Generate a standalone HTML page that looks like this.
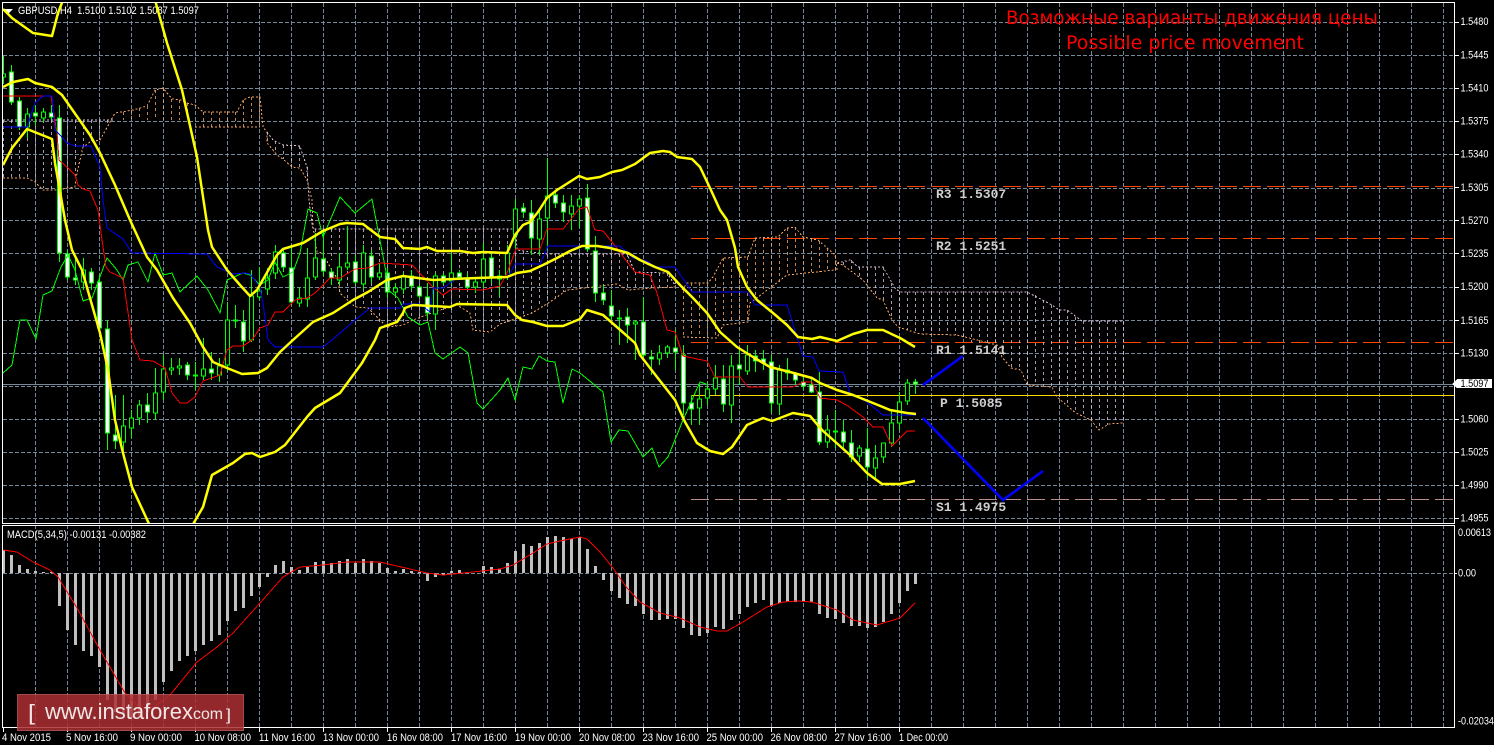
<!DOCTYPE html>
<html><head><meta charset="utf-8"><title>GBPUSD H4</title>
<style>html,body{margin:0;padding:0;background:#000;overflow:hidden}svg{display:block}
.t{font-family:"Liberation Sans",sans-serif;font-size:11px;fill:#fff}
.m{font-family:"Liberation Mono",monospace;font-size:13px;font-weight:bold;fill:#cfcfcf}
.r{font-family:"DejaVu Sans","Liberation Sans",sans-serif;font-size:19px;fill:#f00}
</style></head><body>
<svg xmlns="http://www.w3.org/2000/svg" width="1494" height="745" viewBox="0 0 1494 745">
<defs>
<clipPath id="a"><rect x="3" y="3" width="1451" height="520"/></clipPath>
<clipPath id="b"><rect x="3" y="526" width="1451" height="201"/></clipPath>
</defs>
<rect width="1494" height="745" fill="#000"/>
<!-- grid -->
<g fill="none" stroke="#778899" stroke-width="1" stroke-dasharray="4 2" shape-rendering="crispEdges">
<path d="M3 22.5H1454M3 55.5H1454M3 88.5H1454M3 121.5H1454M3 154.5H1454M3 188.5H1454M3 220.5H1454M3 253.5H1454M3 287.5H1454M3 320.5H1454M3 353.5H1454M3 386.5H1454M3 419.5H1454M3 452.5H1454M3 485.5H1454M3 518.5H1454M3 573.5H1454"/>
<path d="M35.5 3V727M67.5 3V727M99.5 3V727M131.5 3V727M163.5 3V727M195.5 3V727M227.5 3V727M259.5 3V727M291.5 3V727M323.5 3V727M355.5 3V727M387.5 3V727M419.5 3V727M451.5 3V727M483.5 3V727M515.5 3V727M547.5 3V727M579.5 3V727M611.5 3V727M643.5 3V727M675.5 3V727M707.5 3V727M739.5 3V727M771.5 3V727M803.5 3V727M835.5 3V727M867.5 3V727M899.5 3V727M931.5 3V727M963.5 3V727M995.5 3V727M1027.5 3V727M1059.5 3V727M1091.5 3V727M1123.5 3V727M1155.5 3V727M1187.5 3V727M1219.5 3V727M1251.5 3V727M1283.5 3V727M1315.5 3V727M1347.5 3V727M1379.5 3V727M1411.5 3V727M1443.5 3V727"/>
</g>
<!-- bid line + pivots -->
<g fill="none" shape-rendering="crispEdges" stroke-width="1">
<path d="M3 384.5H1454" stroke="#778899"/>
<path d="M691 186.5H1454" stroke="#ff4500" stroke-dasharray="18 6"/>
<path d="M691 238.5H1454" stroke="#ff4500" stroke-dasharray="18 6"/>
<path d="M691 342.5H1454" stroke="#ff4500" stroke-dasharray="18 6"/>
<path d="M691 395.5H1454" stroke="#ffd700"/>
<path d="M691 499.5H1454" stroke="#bc8f8f" stroke-dasharray="18 6"/>
</g>
<!-- title text -->
<path d="M3 9H13L8 14Z" fill="#fff"/>
<text class="t" x="18" y="14" textLength="181" lengthAdjust="spacingAndGlyphs" xml:space="preserve">GBPUSD,H4  1.5100 1.5102 1.5087 1.5097</text>
<text class="t" x="7" y="538" textLength="139" lengthAdjust="spacingAndGlyphs">MACD(5,34,5) -0.00131 -0.00382</text>
<g clip-path="url(#a)">
<!-- ichimoku hatch -->
<g fill="none" stroke-width="1" stroke-dasharray="3 3" stroke-opacity=".8" shape-rendering="crispEdges">
<path stroke="#d8bfd8" d="M3.5 120V178M11.5 120V178M19.5 120V178M27.5 120V178M35.5 120V182M43.5 120V188M51.5 120V190M59.5 120V190M67.5 120V188M75.5 120V176M83.5 120V147M91.5 120V142M99.5 120V140M107.5 120V125M267.5 132V143M275.5 141V153M283.5 145V159M291.5 146V167M299.5 146V168M307.5 167V180M315.5 229V252M323.5 229V255M331.5 229V260M339.5 229V295M347.5 229V300M355.5 229V305M363.5 229V307M371.5 229V315M379.5 229V322M387.5 229V328M395.5 229V326M403.5 229V325M411.5 229V320M419.5 229V318M427.5 229V321M435.5 229V318M443.5 229V314M451.5 229V310M459.5 229V307M467.5 229V305M475.5 229V331M483.5 229V332M491.5 229V329M499.5 229V325M507.5 229V322M515.5 229V320M523.5 251V316M531.5 252V313M539.5 253V307M547.5 254V302M555.5 254V298M563.5 254V292M571.5 254V290M579.5 254V289M587.5 254V287M595.5 254V287M603.5 254V285M611.5 254V285M619.5 254V284M627.5 254V290M635.5 272V289M643.5 272V288M651.5 273V288M659.5 273V287M667.5 273V287M675.5 281V287M843.5 262V265M851.5 260V270M859.5 267V278M867.5 267V283M875.5 267V296M883.5 267V300M891.5 283V318M899.5 292V327M907.5 292V330M915.5 292V334M923.5 292V335M931.5 292V335M939.5 292V335M947.5 292V335M955.5 292V335M963.5 292V338M971.5 292V342M979.5 292V345M987.5 292V348M995.5 292V345M1003.5 292V358M1011.5 292V368M1019.5 292V370M1027.5 292V385M1035.5 295V385M1043.5 300V386M1051.5 305V387M1059.5 310V398M1067.5 310V405M1075.5 317V412M1083.5 321V417M1091.5 321V420M1099.5 321V430M1107.5 321V425M1115.5 321V423M1123.5 321V423"/>
<path stroke="#f4a460" d="M123.5 112V120M131.5 110V120M139.5 108V120M147.5 106V120M155.5 90V120M163.5 88V120M171.5 99V120M179.5 100V120M187.5 103V120M203.5 112V127M211.5 112V127M219.5 112V127M227.5 112V127M235.5 112V127M243.5 100V127M251.5 97V127M259.5 97V127M683.5 290V337M691.5 283V338M699.5 283V338M707.5 283V338M715.5 278V338M723.5 258V325M731.5 257V323M739.5 257V323M747.5 257V322M755.5 238V298M763.5 238V291M771.5 237V287M779.5 237V282M787.5 228V275M795.5 227V275M803.5 237V273M811.5 239V272M819.5 241V272M827.5 248V271M835.5 255V270"/>
</g>
<!-- cloud boundary -->
<g fill="none" stroke-width="1" stroke-dasharray="2 2" shape-rendering="crispEdges">
<polyline stroke="#d8bfd8" points="3,120 115,120"/>
<polyline stroke="#f4a460" points="3,178 27,178 35,182 43,190 59,190 67,188 75,187 77,173 83,147 90,142 100,140 110,122 115,113 133,110 147,106 155,90 163,88 172,99 182,100 187,103 195,105 203,112 237,112 243,100 250,97 260,97 263,127 267,132 267,143 277,155 283,159 292,167 300,168 307,180 312,200 313,227 317,252 322,253 338,280 340,293 355,307 368,308 387,327 403,325 413,320 440,310 457,305 470,313 473,330 490,332 500,324 515,319 532,313 550,302 567,290 593,287 617,284 628,290 653,288 677,287"/>
<polyline stroke="#f4a460" points="195,127 260,127"/>
<polyline stroke="#d8bfd8" points="267,132 273,140 283,145 300,146 302,153 307,167 308,187 310,210 313,229 516,229 517,250 547,254 627,254 635,272 667,273 675,285"/>
<polyline stroke="#f4a460" points="682,290 687,283 708,283 713,277 723,258 748,257 755,238 778,237 787,228 795,227 803,237 818,240 835,255 837,270"/>
<polyline stroke="#f4a460" points="683,337 717,338 723,325 748,322 750,303 770,288 787,275 835,270"/>
<polyline stroke="#d8bfd8" points="837,263 850,260 858,267 883,267 895,288 900,292 1027,292 1052,305 1059,310 1067,310 1082,321 1123,321"/>
<polyline stroke="#f4a460" points="837,263 843,265 863,280 877,298 883,300 892,320 898,327 920,334 957,335 997,345 1002,357 1011,368 1021,370 1027,385 1052,387 1057,397 1064,403 1076,413 1091,420 1099,430 1109,424 1123,423"/>
</g>
<!-- candles -->
<path fill="none" stroke="#0f0" stroke-width="1" shape-rendering="crispEdges" d="M3.5 56V84M11.5 65V105M19.5 97V130M27.5 108V138M35.5 105V125M43.5 108V122M51.5 105V120M59.5 105V262M67.5 250V280M75.5 258V285M83.5 258V290M91.5 268V290M99.5 275V330M107.5 320V450M115.5 395V449M123.5 395V450M131.5 410V438M139.5 400V425M147.5 393V423M155.5 368V420M163.5 355V400M171.5 358V375M179.5 358V375M187.5 362V380M195.5 362V390M203.5 338V380M211.5 352V380M219.5 358V382M227.5 302V372M235.5 305V328M243.5 310V352M251.5 270V342M259.5 267V300M267.5 268V295M275.5 245V279M283.5 248V272M291.5 245V305M299.5 287V307M307.5 248V307M315.5 233V280M323.5 230V276M331.5 268V285M339.5 253V285M347.5 226V270M355.5 255V285M363.5 245V290M371.5 250V283M379.5 263V280M387.5 268V298M395.5 283V295M403.5 273V294M411.5 270V290M419.5 285V298M427.5 283V319M435.5 273V330M443.5 273V285M451.5 253V285M459.5 270V280M467.5 273V290M475.5 277V293M483.5 243V288M491.5 253V283M499.5 270V297M507.5 245V280M515.5 199V250M523.5 203V218M531.5 200V255M539.5 210V255M547.5 158V250M555.5 190V208M563.5 195V222M571.5 195V230M579.5 195V228M587.5 184V252M595.5 236V302M603.5 285V305M611.5 290V320M619.5 310V345M627.5 308V343M635.5 320V360M643.5 297V357M651.5 350V375M659.5 345V365M667.5 345V358M675.5 330V370M683.5 345V415M691.5 395V425M699.5 385V425M707.5 382V405M715.5 365V395M723.5 365V412M731.5 355V423M739.5 350V385M747.5 345V375M755.5 350V372M763.5 350V370M771.5 355V413M779.5 365V415M787.5 358V380M795.5 372V385M803.5 375V390M811.5 378V393M819.5 372V445M827.5 415V448M835.5 410V448M843.5 420V450M851.5 430V462M859.5 445V462M867.5 428V478M875.5 445V478M883.5 445V463M891.5 410V447M899.5 392V430M907.5 379V405M915.5 379V394"/>
<path fill="#000" stroke="#0f0" stroke-width="1" shape-rendering="crispEdges" d="M1.5 74h4v3h-4zM25.5 114h4v13h-4zM41.5 112h4v6h-4zM81.5 270h4v12h-4zM121.5 426h4v16h-4zM129.5 418h4v10h-4zM137.5 405h4v13h-4zM153.5 393h4v20h-4zM161.5 369h4v23h-4zM169.5 368h4v2h-4zM177.5 366h4v2h-4zM193.5 375h4v1h-4zM201.5 369h4v7h-4zM217.5 366h4v9h-4zM225.5 320h4v45h-4zM249.5 296h4v44h-4zM257.5 291h4v6h-4zM265.5 278h4v11h-4zM273.5 252h4v21h-4zM297.5 298h4v5h-4zM305.5 278h4v21h-4zM313.5 258h4v19h-4zM337.5 267h4v13h-4zM345.5 263h4v4h-4zM361.5 253h4v31h-4zM377.5 273h4v4h-4zM393.5 288h4v4h-4zM401.5 277h4v12h-4zM433.5 276h4v38h-4zM449.5 273h4v8h-4zM473.5 282h4v5h-4zM481.5 259h4v23h-4zM497.5 276h4v3h-4zM505.5 253h4v24h-4zM513.5 209h4v26h-4zM537.5 219h4v20h-4zM545.5 196h4v22h-4zM569.5 206h4v8h-4zM577.5 199h4v7h-4zM617.5 318h4v1h-4zM633.5 322h4v2h-4zM657.5 353h4v6h-4zM665.5 347h4v6h-4zM697.5 399h4v9h-4zM705.5 389h4v9h-4zM713.5 378h4v11h-4zM729.5 366h4v39h-4zM745.5 355h4v16h-4zM777.5 370h4v34h-4zM825.5 430h4v12h-4zM833.5 431h4v1h-4zM857.5 448h4v8h-4zM873.5 458h4v10h-4zM881.5 443h4v14h-4zM889.5 423h4v20h-4zM897.5 402h4v21h-4zM905.5 383h4v18h-4z"/>
<path fill="#fff" stroke="#0f0" stroke-width="1" shape-rendering="crispEdges" d="M9.5 72h4v30h-4zM17.5 101h4v26h-4zM33.5 113h4v3h-4zM49.5 113h4v4h-4zM57.5 118h4v135h-4zM65.5 254h4v23h-4zM73.5 278h4v2h-4zM89.5 272h4v11h-4zM97.5 282h4v46h-4zM105.5 329h4v104h-4zM113.5 435h4v6h-4zM145.5 405h4v7h-4zM185.5 365h4v10h-4zM209.5 369h4v4h-4zM233.5 320h4v1h-4zM241.5 322h4v19h-4zM281.5 253h4v14h-4zM289.5 268h4v34h-4zM321.5 259h4v12h-4zM329.5 272h4v6h-4zM353.5 262h4v20h-4zM369.5 256h4v21h-4zM385.5 273h4v19h-4zM409.5 276h4v10h-4zM417.5 287h4v9h-4zM425.5 297h4v16h-4zM441.5 276h4v6h-4zM457.5 273h4v4h-4zM465.5 278h4v9h-4zM489.5 258h4v19h-4zM521.5 208h4v4h-4zM529.5 213h4v25h-4zM553.5 195h4v8h-4zM561.5 203h4v9h-4zM585.5 198h4v51h-4zM593.5 251h4v42h-4zM601.5 293h4v7h-4zM609.5 306h4v10h-4zM625.5 317h4v8h-4zM641.5 322h4v33h-4zM649.5 357h4v2h-4zM673.5 348h4v4h-4zM681.5 355h4v48h-4zM689.5 403h4v6h-4zM721.5 379h4v25h-4zM737.5 365h4v4h-4zM753.5 356h4v5h-4zM761.5 359h4v4h-4zM769.5 362h4v41h-4zM785.5 370h4v3h-4zM793.5 374h4v6h-4zM801.5 382h4v4h-4zM809.5 385h4v7h-4zM817.5 392h4v50h-4zM841.5 432h4v10h-4zM849.5 443h4v14h-4zM865.5 449h4v18h-4zM913.5 382h4v2h-4z"/>
<!-- thin indicators -->
<g fill="none" stroke-width="1" stroke-linejoin="round" shape-rendering="crispEdges">
<polyline stroke="#00ff00" points="3,373 12,365 20,320 27,320 36,339 43,295 52,291 61,267 68,255 75,270 83,301 92,298 107,258 117,270 123,280 128,265 138,262 148,282 155,253 163,275 172,273 180,292 197,276 208,290 220,313 227,280 243,273 250,275 260,285 268,280 275,262 283,277 293,272 300,253 308,209 317,213 323,237 340,197 355,213 372,199 387,277 388,290 398,298 408,317 420,325 428,322 435,353 443,359 460,347 468,353 477,403 483,409 500,390 508,378 515,400 523,367 532,369 539,356 547,361 555,362 563,403 572,369 580,373 603,392 611,442 619,430 628,431 643,457 652,448 659,467 668,457 683,420 700,382 706,384"/>
<polyline stroke="#ff0000" points="3,96 51,96 57,133 59,160 70,170 75,175 78,185 83,189 90,191 98,210 102,240 106,267 110,272 123,278 132,340 140,360 153,361 165,368 172,393 180,403 187,403 195,397 203,381 220,375 227,350 233,346 243,346 252,340 260,328 268,325 275,312 283,312 295,300 307,298 315,293 330,278 340,278 355,269 368,268 380,263 412,265 433,287 443,295 452,289 483,290 500,286 507,273 516,249 540,249 547,229 563,229 579,209 587,207 595,230 603,231 612,242 635,272 650,275 657,293 667,330 675,332 683,356 707,361 715,377 740,377 748,387 793,387 803,382 812,382 820,398 837,400 848,406 863,417 873,427 883,427 892,446 907,431 915,431"/>
<polyline stroke="#0000ff" points="3,127 27,127 35,103 43,96 52,96 55,130 60,135 67,143 75,146 91,146 100,167 103,200 107,228 123,239 132,253 207,254 217,267 233,274 245,273 250,274 260,287 263,303 268,340 275,347 323,347 332,340 355,320 370,308 400,308 403,304 420,304 430,312 433,288 443,288 457,278 508,277 515,264 540,264 548,246 620,246 633,258 647,261 655,267 675,267 692,292 748,292 755,305 787,305 803,356 813,357 819,371 843,372 850,393 867,402 883,415 916,415"/>
</g>
<!-- Bollinger -->
<g fill="none" stroke="#ffff00" stroke-width="2.5" stroke-linejoin="round">
<polyline points="3,9 12,18 33,33 52,36 58,13 63,0"/>
<polyline points="155,0 167,43 182,90 197,157 208,230 212,247 227,270 240,285 250,296 257,290 277,255 283,249 303,243 323,231 340,224 347,223 363,224 380,237 395,239 403,248 420,249 427,247 437,251 460,251 473,253 483,252 507,253 515,235 523,225 530,222 538,212 547,198 557,190 568,183 579,176 587,179 600,177 612,172 622,170 635,164 650,153 663,151 670,152 677,157 692,159 700,167 710,188 720,210 727,220 735,248 738,267 747,287 757,300 773,313 787,325 798,337 812,339 820,337 837,341 853,334 867,330 883,330 900,338 915,347"/>
<polyline points="3,87 13,82 28,79 35,83 52,87 62,95 90,135 100,153 115,185 130,220 147,257 157,270 173,298 190,323 203,347 213,362 227,368 242,374 258,373 267,368 280,352 293,340 313,322 333,313 353,300 368,292 387,280 403,276 433,280 453,279 477,278 507,277 517,273 530,271 543,265 557,258 570,251 582,246 597,246 610,248 628,253 640,260 655,267 668,272 680,285 693,298 707,313 720,332 737,347 753,357 770,367 790,372 812,378 820,383 837,390 853,395 873,403 890,410 907,413 916,414"/>
<polyline points="3,165 12,148 27,129 52,139 55,163 65,220 72,250 82,270 100,333 108,370 115,420 123,453 132,487 150,526"/>
<polyline points="192,526 203,507 212,475 233,463 245,454 252,453 260,457 275,452 285,445 307,417 315,408 340,393 362,363 375,340 380,328 397,322 403,313 405,308 413,305 450,307 457,304 507,305 515,315 522,320 533,322 547,326 563,326 580,319 587,310 603,315 618,328 635,343 640,355 657,377 675,400 685,422 697,443 710,451 723,454 732,447 747,425 763,418 772,421 793,413 810,416 822,430 850,455 867,473 882,484 900,484 915,481"/>
</g>
<!-- scenario arrows -->
<g fill="none" stroke="#0000ff" stroke-width="2.6">
<polyline points="923,385 963,356"/>
<polyline points="923,418 1003,500 1043,471"/>
</g>
</g>
<!-- MACD -->
<g clip-path="url(#b)">
<path fill="none" stroke="#c0c0c0" stroke-width="3" shape-rendering="crispEdges" d="M3.5 573V550M11.5 573V555M19.5 573V565M27.5 573V569M35.5 573V571M43.5 573V572M51.5 573V572M59.5 573V606M67.5 573V630M75.5 573V645M83.5 573V651M91.5 573V656M99.5 573V667M107.5 573V700M115.5 573V712M123.5 573V714M131.5 573V718M139.5 573V718M147.5 573V712M155.5 573V700M163.5 573V682M171.5 573V671M179.5 573V661M187.5 573V656M195.5 573V651M203.5 573V645M211.5 573V641M219.5 573V635M227.5 573V621M235.5 573V611M243.5 573V608M251.5 573V596M259.5 573V587M267.5 573V577M275.5 573V565M283.5 573V561M291.5 573V567M299.5 573V570M307.5 573V567M315.5 573V562M323.5 573V561M331.5 573V563M339.5 573V561M347.5 573V559M355.5 573V563M363.5 573V559M371.5 573V561M379.5 573V563M387.5 573V568M395.5 573V571M403.5 573V569M411.5 573V571M419.5 573V572M427.5 573V581M435.5 573V577M443.5 573V575M451.5 573V571M459.5 573V570M467.5 573V572M483.5 573V566M491.5 573V567M499.5 573V569M507.5 573V563M515.5 573V551M523.5 573V544M531.5 573V546M539.5 573V543M547.5 573V537M555.5 573V536M563.5 573V537M571.5 573V539M579.5 573V537M587.5 573V549M595.5 573V566M603.5 573V580M611.5 573V591M619.5 573V598M627.5 573V604M635.5 573V606M643.5 573V614M651.5 573V620M659.5 573V620M667.5 573V619M675.5 573V619M683.5 573V628M691.5 573V635M699.5 573V636M707.5 573V633M715.5 573V627M723.5 573V629M731.5 573V620M739.5 573V614M747.5 573V607M755.5 573V603M763.5 573V600M771.5 573V606M779.5 573V603M787.5 573V602M795.5 573V602M803.5 573V602M811.5 573V602M819.5 573V614M827.5 573V618M835.5 573V619M843.5 573V623M851.5 573V626M859.5 573V626M867.5 573V628M875.5 573V627M883.5 573V622M891.5 573V614M899.5 573V603M907.5 573V591M915.5 573V584"/>
<polyline fill="none" stroke="#ff0000" stroke-width="1" shape-rendering="crispEdges" points="3,550 17,552 33,562 50,570 58,577 77,608 100,650 125,693 140,708 153,708 170,695 197,662 217,647 233,633 260,603 283,577 300,567 323,565 347,562 380,562 427,573 443,575 473,572 500,569 513,565 523,559 533,553 547,544 560,541 580,537 587,539 600,552 613,568 627,588 640,602 660,613 680,618 700,627 717,631 727,631 743,622 767,607 783,602 797,601 812,602 837,610 853,620 877,625 900,618 915,603"/>
</g>
<!-- pivot labels -->
<text class="m" x="936" y="198">R3 1.5307</text>
<text class="m" x="936" y="250">R2 1.5251</text>
<text class="m" x="936" y="354">R1 1.5141</text>
<text class="m" x="940" y="407">P 1.5085</text>
<text class="m" x="936" y="511">S1 1.4975</text>
<text class="r" x="1006" y="24" textLength="372" lengthAdjust="spacingAndGlyphs">Возможные варианты движения цены</text>
<text class="r" x="1066" y="49" textLength="238" lengthAdjust="spacingAndGlyphs">Possible price movement</text>
<!-- frames -->
<g fill="none" stroke="#fff" stroke-width="1" shape-rendering="crispEdges">
<rect x="2.5" y="2.5" width="1452" height="521"/>
<rect x="2.5" y="525.5" width="1452" height="202"/>
<path d="M1455 22.5h4M1455 55.5h4M1455 88.5h4M1455 121.5h4M1455 154.5h4M1455 187.5h4M1455 220.5h4M1455 253.5h4M1455 287.5h4M1455 320.5h4M1455 353.5h4M1455 419.5h4M1455 452.5h4M1455 485.5h4M1455 518.5h4M1455 573.5h2"/>
<path d="M3.5 728v4M67.5 728v4M131.5 728v4M195.5 728v4M259.5 728v4M323.5 728v4M387.5 728v4M451.5 728v4M515.5 728v4M579.5 728v4M643.5 728v4M707.5 728v4M771.5 728v4M835.5 728v4M899.5 728v4"/>
</g>
<!-- price axis -->
<g class="t">
<text class="t" x="1460.5" y="25" textLength="28" lengthAdjust="spacingAndGlyphs">1.5480</text>
<text class="t" x="1460.5" y="58.5" textLength="28" lengthAdjust="spacingAndGlyphs">1.5445</text>
<text class="t" x="1460.5" y="91.5" textLength="28" lengthAdjust="spacingAndGlyphs">1.5410</text>
<text class="t" x="1460.5" y="124.5" textLength="28" lengthAdjust="spacingAndGlyphs">1.5375</text>
<text class="t" x="1460.5" y="157.5" textLength="28" lengthAdjust="spacingAndGlyphs">1.5340</text>
<text class="t" x="1460.5" y="191" textLength="28" lengthAdjust="spacingAndGlyphs">1.5305</text>
<text class="t" x="1460.5" y="224" textLength="28" lengthAdjust="spacingAndGlyphs">1.5270</text>
<text class="t" x="1460.5" y="257" textLength="28" lengthAdjust="spacingAndGlyphs">1.5235</text>
<text class="t" x="1460.5" y="290" textLength="28" lengthAdjust="spacingAndGlyphs">1.5200</text>
<text class="t" x="1460.5" y="324" textLength="28" lengthAdjust="spacingAndGlyphs">1.5165</text>
<text class="t" x="1460.5" y="356.5" textLength="28" lengthAdjust="spacingAndGlyphs">1.5130</text>
<text class="t" x="1460.5" y="422.5" textLength="28" lengthAdjust="spacingAndGlyphs">1.5060</text>
<text class="t" x="1460.5" y="455.5" textLength="28" lengthAdjust="spacingAndGlyphs">1.5025</text>
<text class="t" x="1460.5" y="488.5" textLength="28" lengthAdjust="spacingAndGlyphs">1.4990</text>
<text class="t" x="1460.5" y="521.5" textLength="28" lengthAdjust="spacingAndGlyphs">1.4955</text>
<text class="t" x="1458" y="536" textLength="33" lengthAdjust="spacingAndGlyphs">0.00613</text>
<text class="t" x="1458" y="576.5" textLength="18" lengthAdjust="spacingAndGlyphs">0.00</text>
<text class="t" x="1458" y="724.5" textLength="36" lengthAdjust="spacingAndGlyphs">-0.02034</text>
</g>
<path d="M1452 384L1457 379H1492V388H1457Z" fill="#fff" shape-rendering="crispEdges"/>
<text x="1460.5" y="387" textLength="28" lengthAdjust="spacingAndGlyphs" style="font-family:'Liberation Sans',sans-serif;font-size:11px;fill:#000">1.5097</text>
<!-- time axis -->
<text class="t" x="2" y="741" textLength="49" lengthAdjust="spacingAndGlyphs">4 Nov 2015</text>
<text class="t" x="66" y="741" textLength="52" lengthAdjust="spacingAndGlyphs">5 Nov 16:00</text>
<text class="t" x="130" y="741" textLength="52" lengthAdjust="spacingAndGlyphs">9 Nov 00:00</text>
<text class="t" x="194.5" y="741" textLength="56.5" lengthAdjust="spacingAndGlyphs">10 Nov 08:00</text>
<text class="t" x="259" y="741" textLength="56" lengthAdjust="spacingAndGlyphs">11 Nov 16:00</text>
<text class="t" x="323" y="741" textLength="56" lengthAdjust="spacingAndGlyphs">13 Nov 00:00</text>
<text class="t" x="387" y="741" textLength="56" lengthAdjust="spacingAndGlyphs">16 Nov 08:00</text>
<text class="t" x="451" y="741" textLength="56" lengthAdjust="spacingAndGlyphs">17 Nov 16:00</text>
<text class="t" x="515" y="741" textLength="56" lengthAdjust="spacingAndGlyphs">19 Nov 00:00</text>
<text class="t" x="579" y="741" textLength="56" lengthAdjust="spacingAndGlyphs">20 Nov 08:00</text>
<text class="t" x="642.5" y="741" textLength="56.5" lengthAdjust="spacingAndGlyphs">23 Nov 16:00</text>
<text class="t" x="706.5" y="741" textLength="56.5" lengthAdjust="spacingAndGlyphs">25 Nov 00:00</text>
<text class="t" x="770.5" y="741" textLength="56.5" lengthAdjust="spacingAndGlyphs">26 Nov 08:00</text>
<text class="t" x="834.5" y="741" textLength="56.5" lengthAdjust="spacingAndGlyphs">27 Nov 16:00</text>
<text class="t" x="899" y="741" textLength="49" lengthAdjust="spacingAndGlyphs">1 Dec 00:00</text>
<!-- logo -->
<rect x="17.5" y="694.5" width="226" height="36" fill="#ab2f33" fill-opacity=".85" stroke="#b9595b" stroke-opacity=".8"/>
<g style="font-family:'Liberation Sans',sans-serif;fill:#f1e6e6">
<text x="28" y="720" style="font-size:22px" textLength="7" lengthAdjust="spacingAndGlyphs">[</text>
<text x="45" y="719" style="font-size:22px" textLength="148" lengthAdjust="spacingAndGlyphs">www.instaforex</text>
<text x="193" y="719" style="font-size:16px" textLength="30" lengthAdjust="spacingAndGlyphs">com</text>
<text x="226" y="720" style="font-size:16px" textLength="5" lengthAdjust="spacingAndGlyphs">]</text>
</g>
</svg>
</body></html>
